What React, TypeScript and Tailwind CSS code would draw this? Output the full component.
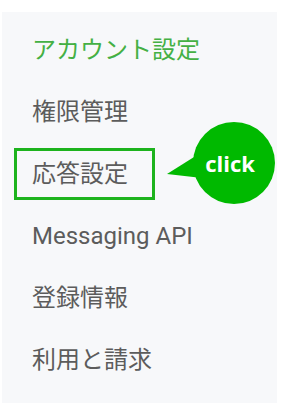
import React from "react";

const items = ["権限管理", "応答設定", "Messaging API", "登録情報", "利用と請求"];

export default function App() {
  return (
    <div className="w-[283px] h-[410px] bg-white pt-[12px] pl-[2px]">
      <div
        className="relative w-[275px] h-[391px] bg-[#f7f8fa] pt-[7px] flex flex-col"
        style={{ fontFamily: 'Roboto, "Noto Sans CJK JP", sans-serif' }}
      >
        <div className="h-[62px] flex items-center pl-[30px] text-[24px] text-[#44b044]">アカウント設定</div>
        {items.map((t) =>
          t === "応答設定" ? (
            <div key={t} className="h-[62px] flex items-center">
              <div className="ml-[12px] w-[141px] h-[52px] border-[3px] border-[#1db31d] flex items-center pl-[15px] text-[24px] text-[#5c5c5c]">
                {t}
              </div>
            </div>
          ) : (
            <div key={t} className="h-[62px] flex items-center pl-[30px] text-[24px] text-[#5c5c5c]">
              {t}
            </div>
          )
        )}
        <div className="absolute left-[156px] top-[88px] w-[120px] h-[110px]">
          <svg width="120" height="110" viewBox="0 0 120 110" className="absolute left-0 top-0">
            <circle cx="76" cy="63" r="41" fill="#00b900" />
            <polygon points="9,74 44,52 44,78" fill="#00b900" />
          </svg>
          <div
            className="absolute left-[31px] top-[22px] w-[82px] h-[82px] flex items-center justify-center text-white font-bold text-[22px]"
            style={{ fontFamily: '"Open Sans", sans-serif' }}
          >
            click
          </div>
        </div>
      </div>
    </div>
  );
}
